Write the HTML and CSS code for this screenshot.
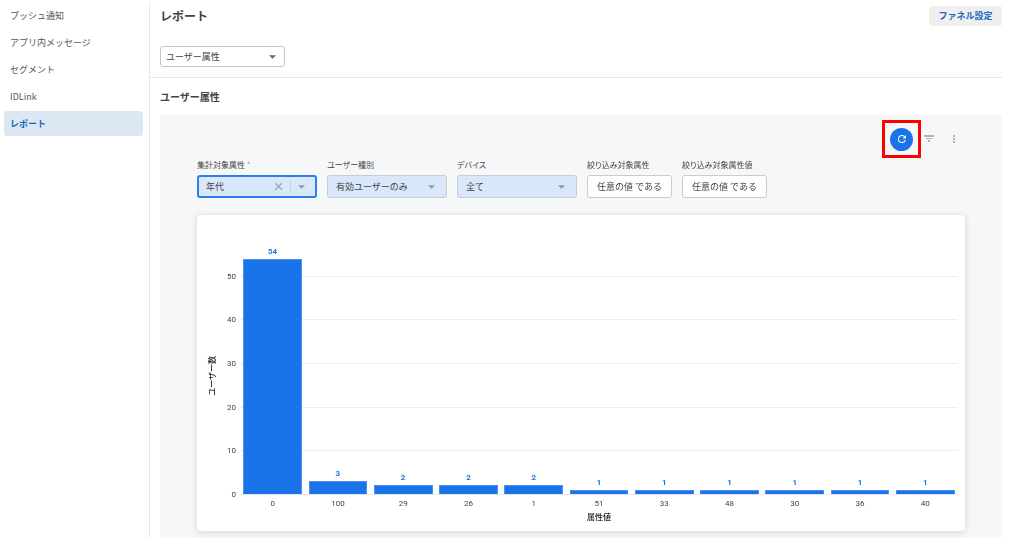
FILE: index.html
```
<!DOCTYPE html>
<html lang="ja">

<head>
    <meta charset="UTF-8">
    <meta name="viewport" content="width=device-width, initial-scale=1.0">
    <title>レポート</title>
    <link rel="stylesheet" href="styles.css">
</head>

<body>

    <nav class="sidebar">
        <a href="#">プッシュ通知</a>
        <a href="#">アプリ内メッセージ</a>
        <a href="#">セグメント</a>
        <a href="#">IDLink</a>
        <a href="#" class="active" aria-current="page">レポート</a>
    </nav>

    <main class="main">
        <header class="header">
            <div class="title-row">
                <h1>レポート</h1>
                <button class="funnel" type="button">ファネル設定</button>
            </div>
            <div class="select report-select">
                <select aria-label="レポート">
                    <option>ユーザー属性</option>
                </select>
                <svg class="arrow" viewBox="0 0 8 4"><path d="M0 0h8L4 4z"/></svg>
            </div>
        </header>

        <h2>ユーザー属性</h2>

        <section class="panel">
            <div class="toolbar">
                <div class="highlight">
                    <button class="refresh" type="button" aria-label="更新">
                        <svg viewBox="0 0 24 24"><path d="M17.65 6.35A7.96 7.96 0 0 0 12 4a8 8 0 1 0 7.73 10h-2.08A6 6 0 1 1 12 6c1.66 0 3.14.69 4.22 1.78L13 11h7V4z"/></svg>
                    </button>
                </div>
                <button class="tool" type="button" aria-label="フィルター">
                    <svg viewBox="0 0 12 12"><path d="M1 2h10v2H1zM3 5h6v1H3zM5 7h2v2H5z"/></svg>
                </button>
                <button class="tool" type="button" aria-label="メニュー">
                    <svg viewBox="0 0 12 12"><path d="M5 2h2v2H5zM5 5h2v2H5zM5 8h2v2H5z"/></svg>
                </button>
            </div>

            <div class="content">
                <form class="filters">
                    <div class="field">
                        <label for="attr">集計対象属性 <span>*</span></label>
                        <div class="combo">
                            <input id="attr" type="text" value="年代">
                            <button type="button" aria-label="クリア">
                                <svg viewBox="0 0 8 8"><path d="M1 1l6 6M7 1L1 7"/></svg>
                            </button>
                            <button class="open" type="button" aria-label="開く">
                                <svg class="arrow" viewBox="0 0 8 4"><path d="M0 0h8L4 4z"/></svg>
                            </button>
                        </div>
                    </div>
                    <div class="field">
                        <label for="kind">ユーザー種別</label>
                        <div class="select">
                            <select id="kind">
                                <option>有効ユーザーのみ</option>
                            </select>
                            <svg class="arrow" viewBox="0 0 8 4"><path d="M0 0h8L4 4z"/></svg>
                        </div>
                    </div>
                    <div class="field">
                        <label for="device">デバイス</label>
                        <div class="select">
                            <select id="device">
                                <option>全て</option>
                            </select>
                            <svg class="arrow" viewBox="0 0 8 4"><path d="M0 0h8L4 4z"/></svg>
                        </div>
                    </div>
                    <div class="field small">
                        <label for="target">絞り込み対象属性</label>
                        <button id="target" type="button">任意の値 である</button>
                    </div>
                    <div class="field small">
                        <label for="target-value">絞り込み対象属性値</label>
                        <button id="target-value" type="button">任意の値 である</button>
                    </div>
                </form>

                <div class="chart">
                    <div class="y-title">ユーザー数</div>
                    <div class="y-axis">
                        <span>50</span>
                        <span>40</span>
                        <span>30</span>
                        <span>20</span>
                        <span>10</span>
                        <span>0</span>
                    </div>
                    <div class="plot">
                        <div class="lines">
                            <i></i><i></i><i></i><i></i><i></i><i></i>
                        </div>
                        <div class="bars">
                            <div class="col"><b>54</b><div class="bar" style="height: 90%"></div></div>
                            <div class="col"><b>3</b><div class="bar" style="height: 5%"></div></div>
                            <div class="col"><b>2</b><div class="bar" style="height: 3.33%"></div></div>
                            <div class="col"><b>2</b><div class="bar" style="height: 3.33%"></div></div>
                            <div class="col"><b>2</b><div class="bar" style="height: 3.33%"></div></div>
                            <div class="col"><b>1</b><div class="bar" style="height: 1.67%"></div></div>
                            <div class="col"><b>1</b><div class="bar" style="height: 1.67%"></div></div>
                            <div class="col"><b>1</b><div class="bar" style="height: 1.67%"></div></div>
                            <div class="col"><b>1</b><div class="bar" style="height: 1.67%"></div></div>
                            <div class="col"><b>1</b><div class="bar" style="height: 1.67%"></div></div>
                            <div class="col"><b>1</b><div class="bar" style="height: 1.67%"></div></div>
                        </div>
                    </div>
                    <div class="x-axis">
                        <span>0</span>
                        <span>100</span>
                        <span>29</span>
                        <span>26</span>
                        <span>1</span>
                        <span>51</span>
                        <span>33</span>
                        <span>48</span>
                        <span>30</span>
                        <span>36</span>
                        <span>40</span>
                    </div>
                    <div class="x-title">属性値</div>
                </div>
            </div>
        </section>
    </main>

    <script>
        // start with the caret after the attribute name
        const attr = document.getElementById("attr");
        attr.focus();
        attr.setSelectionRange(attr.value.length, attr.value.length);
    </script>

</body>

</html>
```
FILE: styles.css
```
* {
    box-sizing: border-box;
}
body {
    margin: 0;
    padding: 2px 7px 5px 4px;
    display: flex;
    background: #fff;
    color: #444;
    font-family: "Noto Sans CJK JP", sans-serif;
    font-size: 9px;
    line-height: 12px;
}
button, input, select {
    font: inherit;
    color: inherit;
    margin: 0;
    padding: 0;
    border: 0;
    background: none;
}
button {
    cursor: pointer;
}
svg {
    display: block;
}

/* side menu */
.sidebar {
    width: 146px;
    flex: none;
    display: flex;
    flex-direction: column;
    gap: 2px;
    padding: 1px 6px 0 0;
    border-right: 1px solid #e8e8ea;
}
.sidebar a {
    height: 25px;
    padding: 0 6px;
    border-radius: 3px;
    line-height: 25px;
    color: #555;
    text-decoration: none;
}
.sidebar .active {
    background: #dbe8f4;
    color: #1765b8;
    font-weight: bold;
}

/* header */
.main {
    flex: 1;
    min-width: 0;
}
.header {
    padding: 4px 0 10px 10px;
    border-bottom: 1px solid #e6e7e9;
}
.title-row {
    display: flex;
    justify-content: space-between;
    align-items: center;
    margin-bottom: 20px;
}
h1 {
    margin: 0;
    font-size: 12px;
    line-height: 20px;
}
h2 {
    margin: 0;
    padding: 9px 10px 8px;
    font-size: 10px;
    line-height: 20px;
}
.funnel {
    width: 73px;
    height: 20px;
    border-radius: 3px;
    background: #efefef;
    color: #1b69c0;
    font-weight: bold;
}

/* the arrow shares the grid cell with the select */
.select {
    display: grid;
    align-items: center;
}
.select select,
.select .arrow {
    grid-area: 1 / 1;
}
.select select {
    appearance: none;
    width: 100%;
    height: 23px;
    padding: 0 8px;
    border: 1px solid #c8ccd0;
    border-radius: 3px;
    background: #d9e7fa;
}
.arrow {
    width: 7px;
    height: 4px;
    fill: #9299a0;
}
.select .arrow {
    justify-self: end;
    margin-right: 12px;
    pointer-events: none;
}
.report-select {
    width: 125px;
}
.report-select select {
    height: 21px;
    padding: 0 5px;
    border-color: #c6c6c6;
    background: #fff;
}
.report-select .arrow {
    margin-right: 9px;
    fill: #666;
}

/* panel */
.panel {
    margin-left: 10px;
    padding: 5px 0 7px;
    background: #f6f7f9;
}
.toolbar {
    display: flex;
    justify-content: flex-end;
    align-items: center;
    gap: 13px;
    padding-right: 42px;
}
.highlight {
    display: flex;
    align-items: center;
    justify-content: center;
    width: 39px;
    height: 38px;
    margin-right: -11px;
    border: 3px solid #f00;
}
.refresh {
    display: flex;
    align-items: center;
    justify-content: center;
    width: 23px;
    height: 23px;
    border-radius: 50%;
    background: #1a73e8;
}
.refresh svg {
    width: 12px;
    height: 12px;
    fill: #fff;
}
.tool svg {
    width: 12px;
    height: 12px;
    fill: #b0b4b8;
}
.content {
    padding: 0 37px;
}

/* filters */
.filters {
    display: flex;
    gap: 10px;
    margin-bottom: 17px;
}
.field {
    width: 120px;
}
.field.small {
    width: 85px;
}
.field label {
    display: block;
    height: 17px;
    font-size: 8px;
    line-height: 14px;
    white-space: nowrap;
    font-feature-settings: "palt";
}
.field label span {
    color: #999;
}
.field.small button {
    width: 100%;
    height: 23px;
    border: 1px solid #c8ccd0;
    border-radius: 3px;
    background: #fff;
}
.combo {
    display: flex;
    align-items: center;
    height: 23px;
    padding: 0 10px 0 7px;
    border: 2px solid #2f7de9;
    border-radius: 3px;
    background: #d9e7fa;
}
.combo input {
    flex: 1;
    min-width: 0;
    outline: none;
}
.combo button svg {
    width: 9px;
    height: 9px;
    stroke: #9299a0;
}
.combo .open {
    margin-left: 7px;
    padding: 4px 0 4px 7px;
    border-left: 1px solid #c8d2de;
}
.combo .open svg {
    width: 7px;
    height: 4px;
    stroke: none;
}

/* bar chart, 0 to 60 */
.chart {
    display: grid;
    grid-template-columns: 21px 22px 1fr;
    grid-template-rows: 262px auto auto;
    padding: 18px 7px 8px 0;
    border-radius: 4px;
    background: #fff;
    box-shadow: 0 1px 6px rgba(60, 64, 67, 0.2);
}
.y-title, .x-title {
    font-size: 8px;
    font-weight: 500;
    color: #222;
}
.y-title {
    align-self: center;
    justify-self: end;
    margin-top: 24px;
    writing-mode: vertical-rl;
    text-orientation: sideways;
    transform: rotate(180deg);
}
.y-axis, .x-axis, .col b {
    font-family: Roboto, sans-serif;
    font-size: 8px;
    line-height: 10px;
}
.y-axis {
    display: flex;
    flex-direction: column;
    margin-bottom: -5px;
    padding: 5px 4px 0 0;
}
.y-axis span {
    flex: 1;
    display: flex;
    align-items: flex-end;
    justify-content: flex-end;
}
.plot {
    display: grid;
}
.lines, .bars {
    grid-area: 1 / 1;
    display: flex;
}
.lines {
    flex-direction: column;
}
.lines i {
    flex: 1;
    border-bottom: 1px solid #ededee;
}
.lines i:last-child {
    border-color: #dfe3ee;
}
.bars {
    margin-bottom: 1px;
}
.col {
    flex: 1;
    display: flex;
    flex-direction: column;
    justify-content: flex-end;
    align-items: center;
}
.col b {
    margin-bottom: 2px;
    color: #1a73e8;
}
.bar {
    flex: none;
    width: 90%;
    border: 1px solid #4a90ee;
    border-bottom: 0;
    background: #1a73e8;
}
.x-axis {
    grid-column: 3;
    display: flex;
    padding-top: 4px;
}
.x-axis span {
    flex: 1;
    text-align: center;
}
.x-title {
    grid-column: 3;
    padding-top: 2px;
    text-align: center;
}
```
